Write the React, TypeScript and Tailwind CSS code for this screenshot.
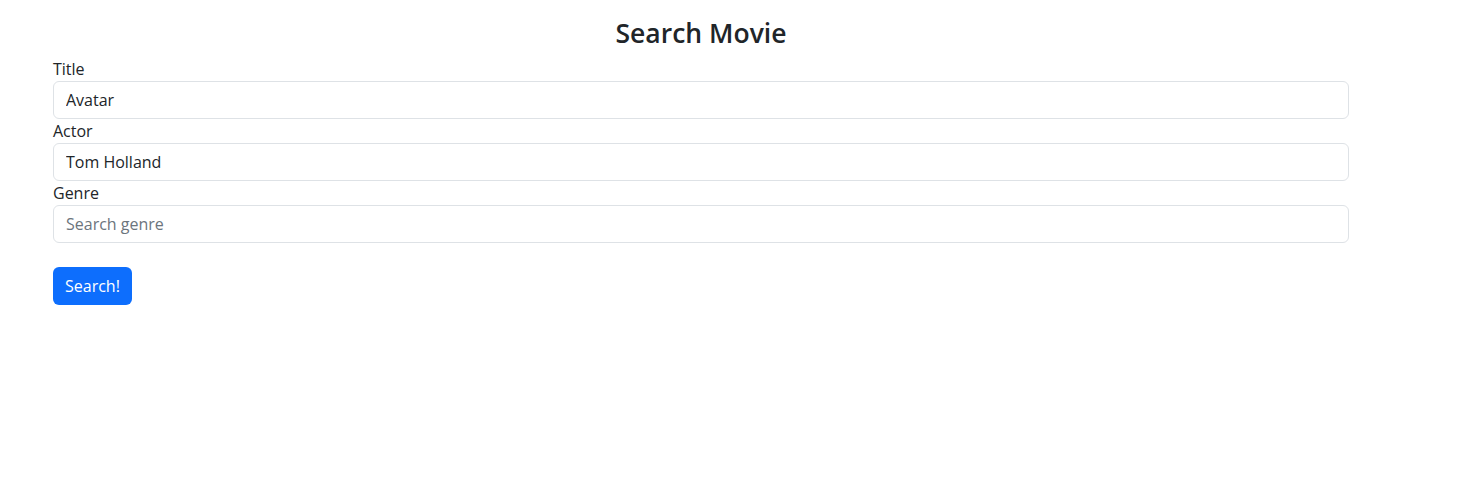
import { useState } from "react";

export default function App() {
  const [title, setTitle] = useState("Avatar");
  const [actor, setActor] = useState("Tom Holland");
  const [genre, setGenre] = useState("");

  const inputCls =
    "block w-full h-[38px] px-3 py-1.5 text-[16px] leading-6 text-[#212529] bg-white border border-[#dee2e6] rounded-[6px] outline-none placeholder:text-[#6c757d] focus:border-[#86b7fe]";

  return (
    <div className="min-h-screen bg-white text-[#212529] font-['Open_Sans',sans-serif]">
      <div className="w-[1296px] ml-[53px] pt-[17px]">
        <h3 className="text-center text-[26.5px] leading-[32px] font-semibold mb-2">Search Movie</h3>
        <form onSubmit={(e) => e.preventDefault()}>
          <label className="block text-[16px] leading-6">Title</label>
          <input className={inputCls} value={title} onChange={(e) => setTitle(e.target.value)} />
          <label className="block text-[16px] leading-6">Actor</label>
          <input className={inputCls} value={actor} onChange={(e) => setActor(e.target.value)} />
          <label className="block text-[16px] leading-6">Genre</label>
          <input
            className={inputCls}
            placeholder="Search genre"
            value={genre}
            onChange={(e) => setGenre(e.target.value)}
          />
          <button
            type="submit"
            className="mt-6 h-[38px] px-3 text-[16px] leading-6 text-white bg-[#0d6efd] rounded-[6px] hover:bg-[#0b5ed7]"
          >
            Search!
          </button>
        </form>
      </div>
    </div>
  );
}
